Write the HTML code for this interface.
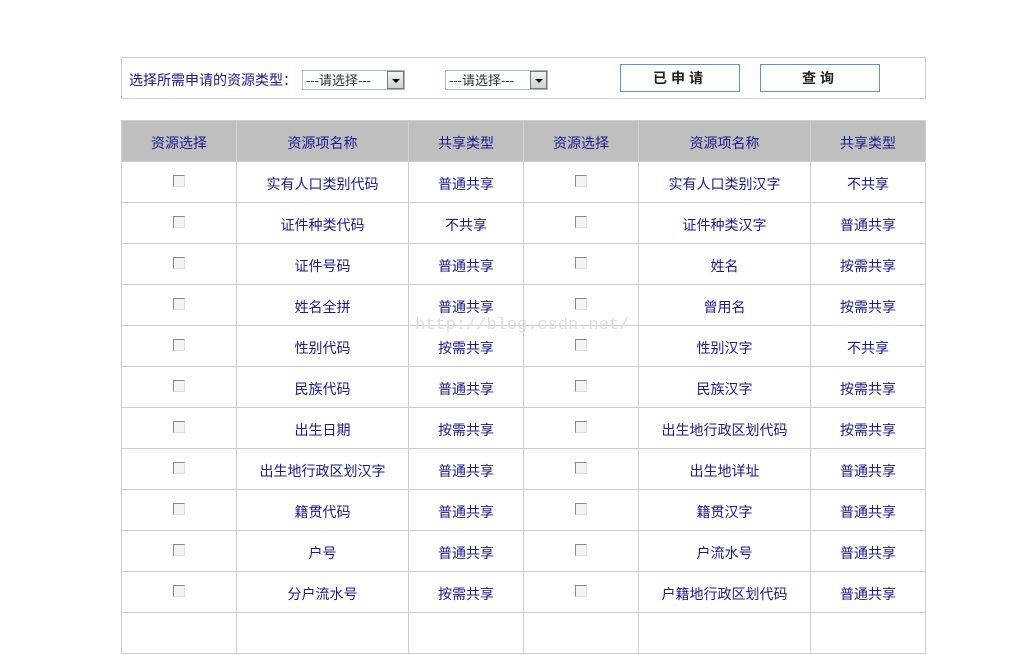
<!DOCTYPE html>
<html><head><meta charset="utf-8"><style>
*{margin:0;padding:0;box-sizing:border-box}
body{width:1027px;height:626px;background:#fff;position:relative;overflow:hidden;font-family:"Liberation Sans","Noto Sans CJK SC",sans-serif;font-size:14px;color:#1a1a8c}
.top{position:absolute;left:121px;top:57px;width:805px;height:42px;border:1px solid #ccc}
.lbl{position:absolute;left:129px;top:70px;color:#1a1a8c;font-size:14px}
.sel{position:absolute;top:70px;width:103px;height:20px;border:1px solid #a8b8cc;font-size:13px;color:#333;padding-left:3px;line-height:19px}
.sel i{position:absolute;right:0;top:0;width:17px;height:18px;background:linear-gradient(#f4f4f4,#d0d0d0);border:1px solid #777}
.sel i:after{content:"";position:absolute;left:4px;top:7px;border-left:4px solid transparent;border-right:4px solid transparent;border-top:4px solid #000}
.btn{position:absolute;top:64px;width:120px;height:28px;border:1px solid #5b8fe0;color:#222;font-weight:bold;font-size:14px;text-align:center;line-height:26px;letter-spacing:4px}
table{position:absolute;left:121px;top:120px;border-collapse:collapse;table-layout:fixed}
td,th{border:1px solid #ccc;height:41px;text-align:center;font-weight:normal;font-size:14px;color:#1a1a8c;padding-top:3px}
th{background:#bfbfbf;border-color:#d0d0d0}
.cb{display:inline-block;width:12px;height:12px;border:1px solid #888;border-right-color:#ddd;border-bottom-color:#ddd;background:#f4f4f4;vertical-align:middle;position:relative;top:-4px}
.wm{position:absolute;left:415px;top:316px;color:#ddd;font-family:"Liberation Mono",monospace;font-size:17px}
</style></head><body>
<div class="top"></div>
<div class="lbl">选择所需申请的资源类型：</div>
<div class="sel" style="left:302px">---请选择---<i></i></div>
<div class="sel" style="left:445px">---请选择---<i></i></div>
<div class="btn" style="left:620px">已申请</div>
<div class="btn" style="left:760px">查询</div>
<table>
<colgroup><col style="width:115px"><col style="width:172px"><col style="width:115px"><col style="width:115px"><col style="width:172px"><col style="width:115px"></colgroup>
<tr><th>资源选择</th><th>资源项名称</th><th>共享类型</th><th>资源选择</th><th>资源项名称</th><th>共享类型</th></tr>
<tr><td><span class="cb"></span></td><td>实有人口类别代码</td><td>普通共享</td><td><span class="cb"></span></td><td>实有人口类别汉字</td><td>不共享</td></tr>
<tr><td><span class="cb"></span></td><td>证件种类代码</td><td>不共享</td><td><span class="cb"></span></td><td>证件种类汉字</td><td>普通共享</td></tr>
<tr><td><span class="cb"></span></td><td>证件号码</td><td>普通共享</td><td><span class="cb"></span></td><td>姓名</td><td>按需共享</td></tr>
<tr><td><span class="cb"></span></td><td>姓名全拼</td><td>普通共享</td><td><span class="cb"></span></td><td>曾用名</td><td>按需共享</td></tr>
<tr><td><span class="cb"></span></td><td>性别代码</td><td>按需共享</td><td><span class="cb"></span></td><td>性别汉字</td><td>不共享</td></tr>
<tr><td><span class="cb"></span></td><td>民族代码</td><td>普通共享</td><td><span class="cb"></span></td><td>民族汉字</td><td>按需共享</td></tr>
<tr><td><span class="cb"></span></td><td>出生日期</td><td>按需共享</td><td><span class="cb"></span></td><td>出生地行政区划代码</td><td>按需共享</td></tr>
<tr><td><span class="cb"></span></td><td>出生地行政区划汉字</td><td>普通共享</td><td><span class="cb"></span></td><td>出生地详址</td><td>普通共享</td></tr>
<tr><td><span class="cb"></span></td><td>籍贯代码</td><td>普通共享</td><td><span class="cb"></span></td><td>籍贯汉字</td><td>普通共享</td></tr>
<tr><td><span class="cb"></span></td><td>户号</td><td>普通共享</td><td><span class="cb"></span></td><td>户流水号</td><td>普通共享</td></tr>
<tr><td><span class="cb"></span></td><td>分户流水号</td><td>按需共享</td><td><span class="cb"></span></td><td>户籍地行政区划代码</td><td>普通共享</td></tr>
<tr><td></td><td></td><td></td><td></td><td></td><td></td></tr>
</table>
<div class="wm">http://blog.csdn.net/</div>
</body></html>
